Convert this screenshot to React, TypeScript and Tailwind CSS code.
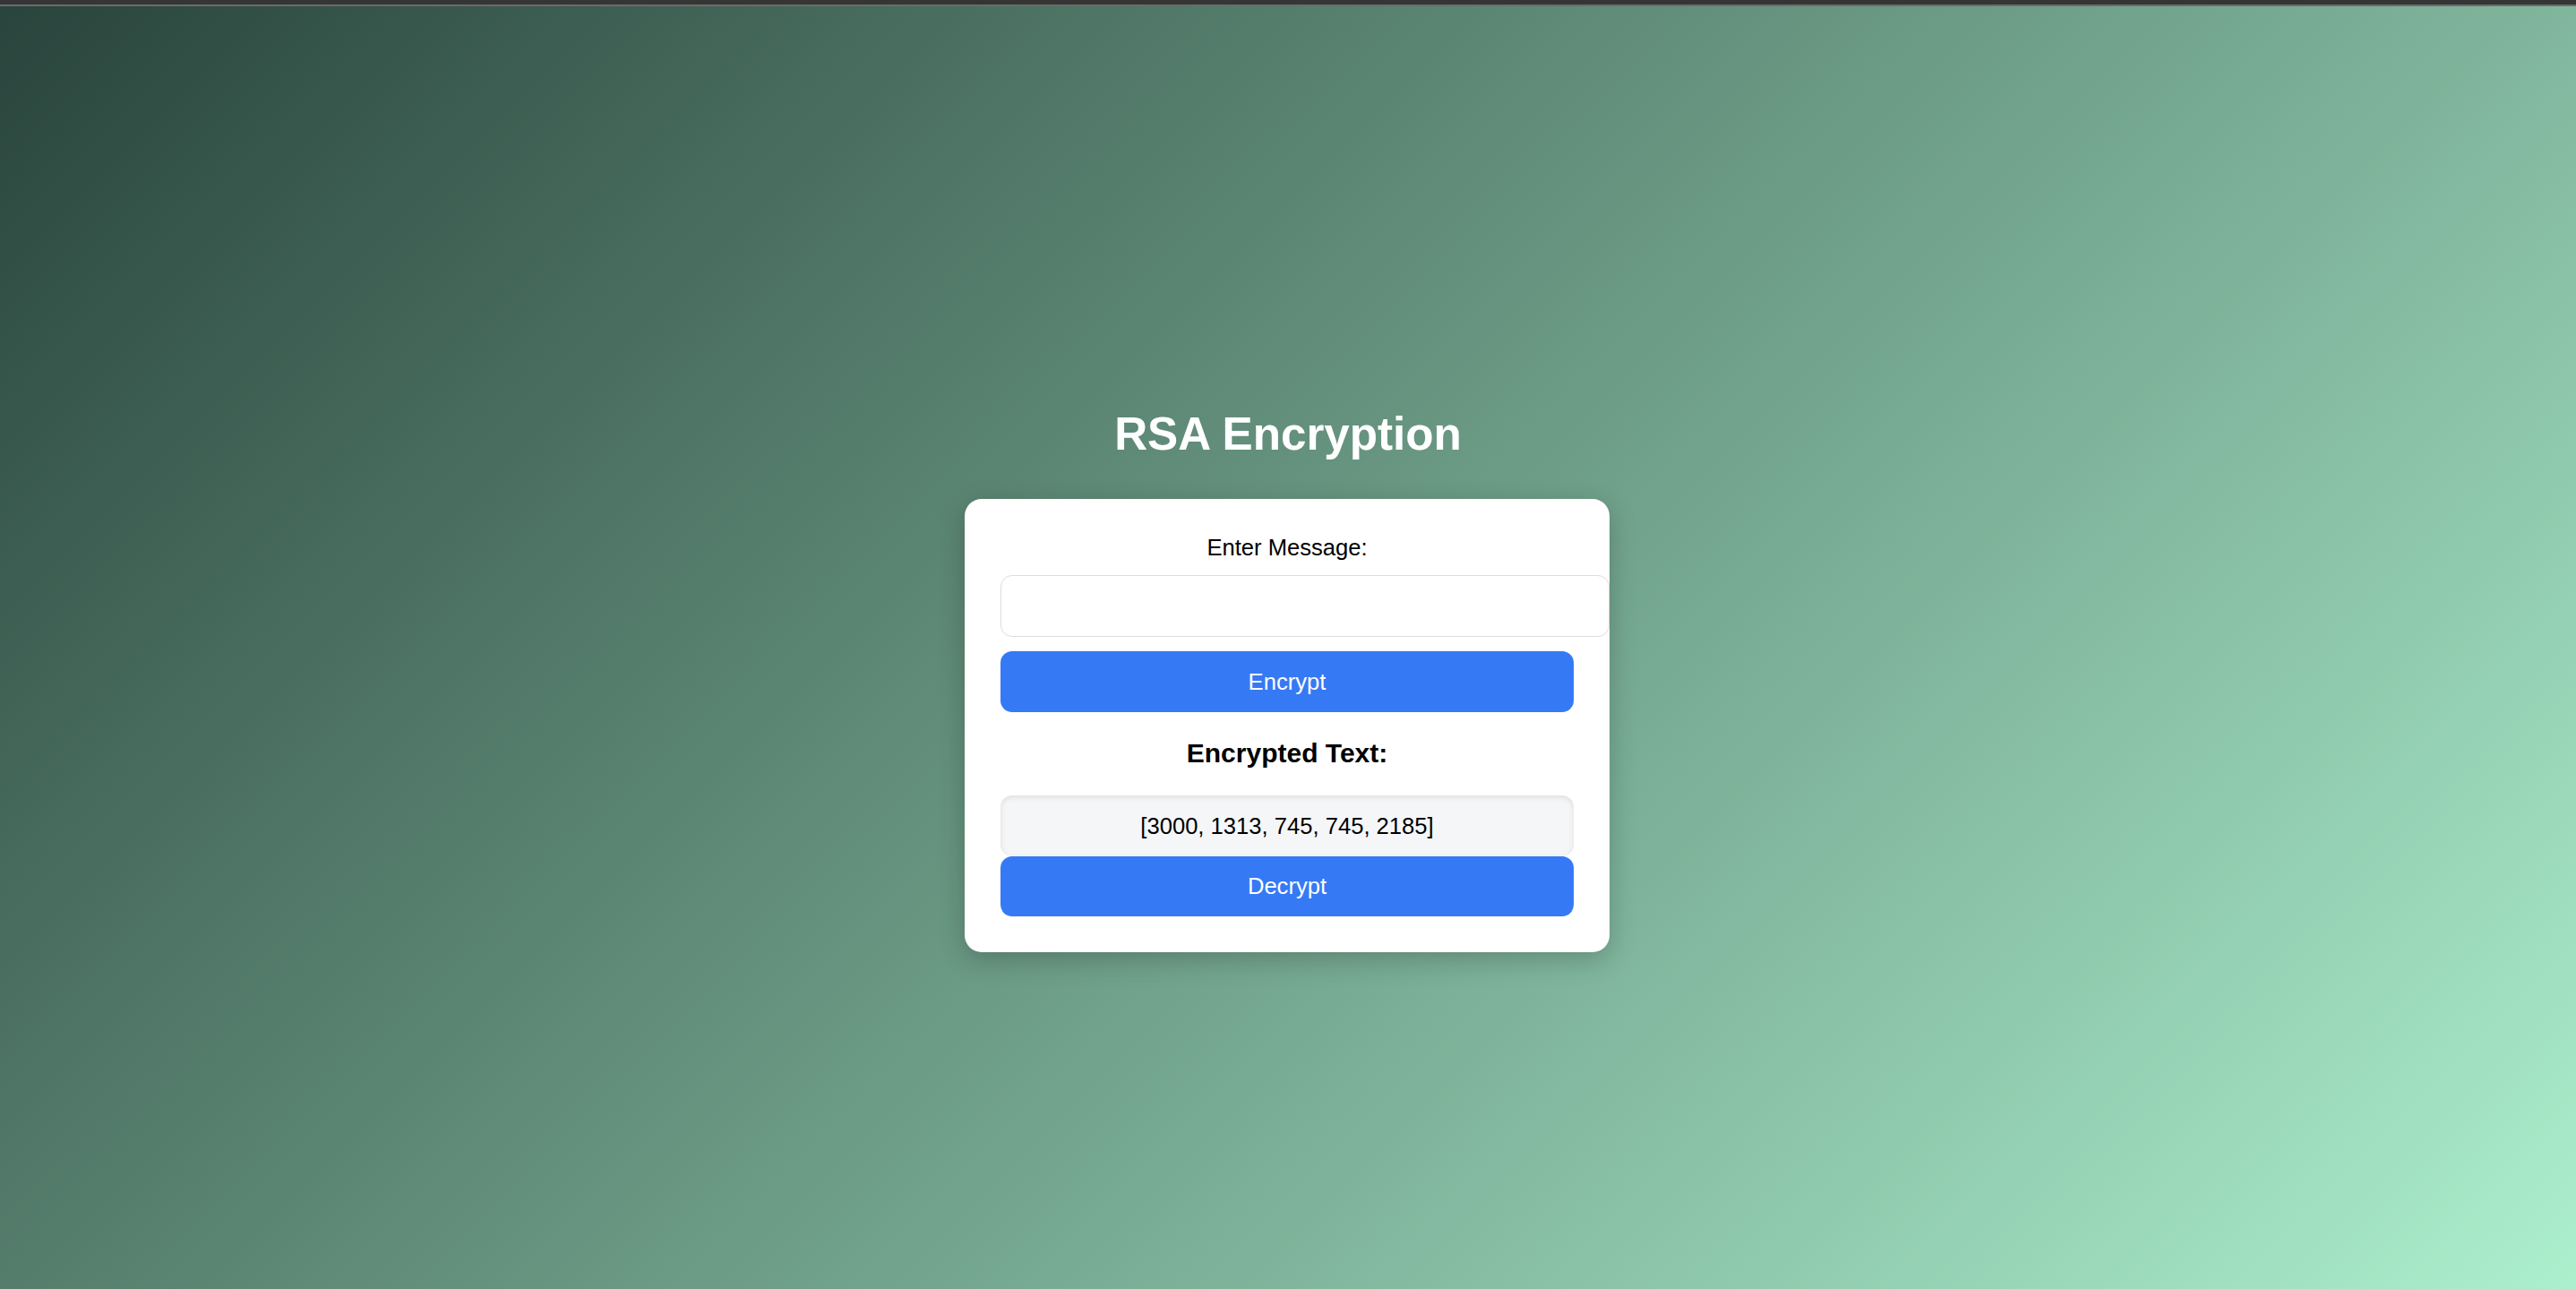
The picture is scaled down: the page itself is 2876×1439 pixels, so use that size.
const font = { fontFamily: '"Liberation Sans", Arial, sans-serif' };

const App = () => {
  return (
    <div className="h-screen flex flex-col overflow-hidden" style={font}>
      <div className="h-[5px] bg-[#353535]" />
      <div className="h-[2px] bg-[#6b6b6b]" />
      <div className="flex-1 flex flex-col items-center pt-[448px] bg-[linear-gradient(135deg,#29443c,#acefcd)]">
        <h1 className="text-[51.2px] leading-[59px] font-bold text-white mb-[43px]">RSA Encryption</h1>
        <div className="w-[720px] mr-[2px] p-10 bg-white rounded-[19px] shadow-[0_8px_30px_rgba(0,0,0,0.22)] text-center">
          <label className="block text-[25.6px] leading-[29px] text-black mb-4">Enter Message:</label>
          <input
            type="text"
            className="block w-[calc(100%+40px)] h-[69px] px-5 border border-[#dddddd] rounded-[13px] text-[25.6px] outline-none bg-white"
          />
          <button className="block w-full h-[68px] mt-4 rounded-[13px] bg-[#3679f5] text-white text-[25.6px]">
            Encrypt
          </button>
          <h3 className="text-[30px] leading-[33px] font-bold text-black mt-[29px] mb-[31px]">Encrypted Text:</h3>
          <div className="h-[68px] flex items-center justify-center rounded-[13px] bg-[#f5f6f8] shadow-[inset_0_2px_6px_rgba(0,0,0,0.1)] text-[25.6px] text-black">
            [3000, 1313, 745, 745, 2185]
          </div>
          <button className="block w-full h-[67px] rounded-[13px] bg-[#3679f5] text-white text-[25.6px]">
            Decrypt
          </button>
        </div>
      </div>
    </div>
  );
};

export default App;
